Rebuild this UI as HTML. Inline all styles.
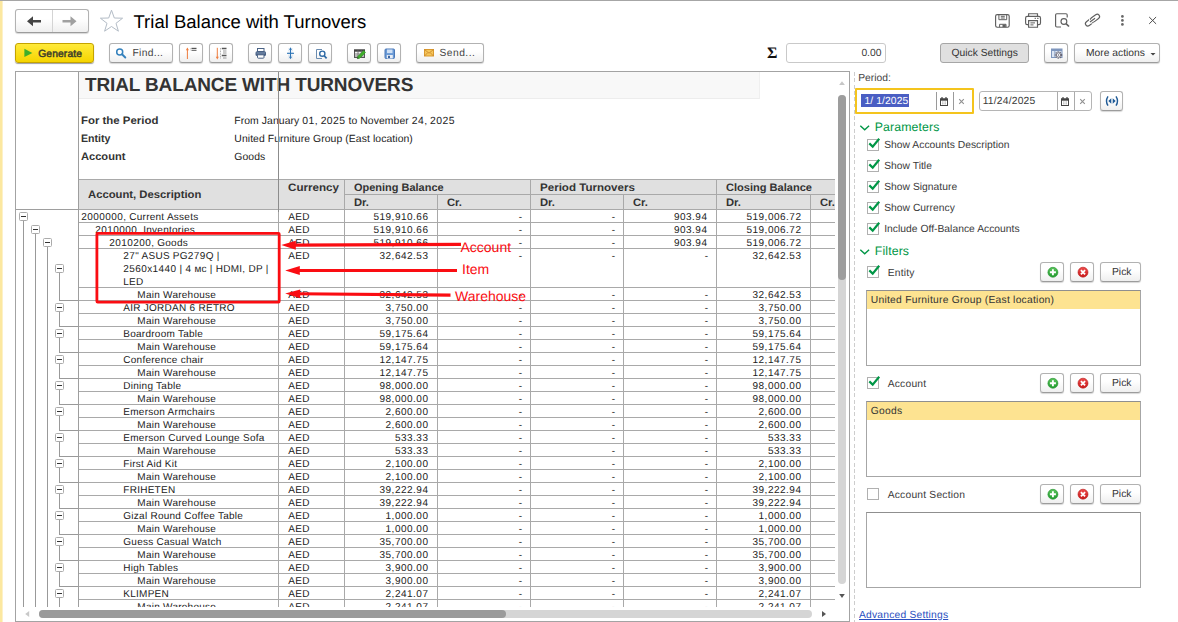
<!DOCTYPE html>
<html><head><meta charset="utf-8"><title>Trial Balance with Turnovers</title>
<style>
*{box-sizing:border-box;margin:0;padding:0}
html,body{width:1178px;height:622px;overflow:hidden;background:#fff}
body{position:relative;font-family:"Liberation Sans",sans-serif;font-size:10.3px;color:#333;text-rendering:geometricPrecision}
.abs{position:absolute}
.t{position:absolute;white-space:nowrap;line-height:1}
.btn{position:absolute;height:20px;border:1px solid #b2b2b2;border-bottom-color:#9c9c9c;border-radius:3px;background:linear-gradient(#ffffff 40%,#efefef);box-shadow:0 1px 1px rgba(0,0,0,.16)}
.btn svg{position:absolute;left:0;top:0}
.bt{position:absolute;white-space:nowrap;line-height:1;top:5px;font-size:10.3px;color:#333}
/* sheet */
#sheet{position:absolute;left:15px;top:71px;width:835px;height:551px;border:1px solid #a3a3a3;border-right-color:#a3a3a3;background:#fff;overflow:hidden}
#grid{position:absolute;left:0;top:0;width:819px;height:535px;overflow:hidden}
#gi{position:absolute;left:-16px;top:-72px;width:1178px;height:622px}
.hl{position:absolute;height:1px;background:#a9a9a9}
.vl{position:absolute;width:1px;background:#a9a9a9}
.c{position:absolute;white-space:nowrap;line-height:1;font-size:10px;color:#222;letter-spacing:.26px}
.d{letter-spacing:.42px}
.n{position:absolute;white-space:nowrap;line-height:1;font-size:10px;color:#222;text-align:right;letter-spacing:.5px}
.hb{position:absolute;white-space:nowrap;line-height:1;font-size:10.8px;font-weight:bold;color:#333;transform-origin:0 0}
.gb{position:absolute;width:9px;height:9px;border:1px solid #ababab;border-radius:1.5px;background:#fff}
.gb:after{content:"";position:absolute;left:1px;top:3px;width:5px;height:1px;background:#333}
.gl{position:absolute;width:1px;background:#999}
.gh{position:absolute;height:1px;background:#999}
/* right panel */
.cb{position:absolute;width:12px;height:12px;border:1px solid #b0b0b0;background:#fff}
.cb svg{position:absolute;left:-1px;top:-3px}
.lb{position:absolute;left:866px;width:275px;height:76px;border:1px solid #a6a6a6;border-top-color:#8f8f8f;background:#fff}
.lb .sel{position:absolute;left:0;top:0;right:0;height:18px;background:#fde391}
.lb .sel span{position:absolute;left:3.800px;top:5px;line-height:1;white-space:nowrap;color:#333}
.ui{font-size:10.3px;color:#3a3a3a;letter-spacing:.02px}
.grp{position:absolute;font-size:12.3px;color:#009646;line-height:1;white-space:nowrap;letter-spacing:.12px}
</style></head><body>
<!-- window chrome -->
<div class="abs" style="left:0;top:0;width:1178px;height:1px;background:#a6a6a6"></div>
<div class="abs" style="left:0;top:1px;width:3px;height:621px;background:linear-gradient(90deg,#fce8a0 0,#fce8a0 2px,#fdf1c8 2px)"></div>

<!-- nav -->
<div class="btn" style="left:15px;top:9px;width:74px;height:24px;border-radius:3px"></div>
<div class="abs" style="left:52px;top:10px;width:1px;height:22px;background:#d4d4d4"></div>
<svg class="abs" style="left:15px;top:9px" width="74" height="23" viewBox="0 0 74 23">
<path d="M12 12.2 L18 7.2 L18 10.9 L26 10.9 L26 13.5 L18 13.5 L18 17.2 Z" fill="#444"/>
<path d="M61.5 12.2 L55.5 7.2 L55.5 10.9 L47.5 10.9 L47.5 13.5 L55.5 13.5 L55.5 17.2 Z" fill="#a0a0a0"/>
</svg>
<svg class="abs" style="left:98px;top:8.300px" width="28" height="26" viewBox="0 0 28 26">
<path d="M13.5 2.2 L16.3 10 L24.6 10.2 L18 15.3 L20.4 23.2 L13.5 18.5 L6.6 23.2 L9 15.3 L2.4 10.2 L10.7 10 Z" fill="#fff" stroke="#b3bcc6" stroke-width="1"/>
</svg>
<div class="t" style="left:133.5px;top:13px;font-size:18.5px;color:#000">Trial Balance with Turnovers</div>

<!-- top-right icons -->
<svg class="abs" style="left:988px;top:6px" width="180" height="30" viewBox="988 6 180 30" fill="none" stroke="#5f5f5f" stroke-width="1.150">
<!-- save -->
<rect x="995.600" y="14.600" width="13.600" height="12.600" rx="1.600"/>
<path d="M998.900 14.600 V19.700 H1006.700 V14.600 M1000.800 16.300 H1004.800 M1000.800 18 H1004.800" stroke-width="1"/>
<path d="M999.600 27.200 V24.300 H1006 V27.200" stroke-width="1"/><rect x="1002.500" y="24.600" width="3.200" height="2.600" fill="#5f5f5f" stroke="none"/>
<!-- print -->
<path d="M1028.600 16.400 V13.700 H1037.500 V16.400"/>
<path d="M1028.600 24.600 H1027.200 a1.600 1.600 0 0 1 -1.600 -1.600 V18 a1.600 1.600 0 0 1 1.600 -1.600 H1038.900 a1.600 1.600 0 0 1 1.600 1.600 V23 a1.600 1.600 0 0 1 -1.600 1.600 H1037.500"/>
<path d="M1028.600 20.600 H1037.500 V27.200 H1028.600 Z"/><path d="M1030.400 22.900 H1035 M1030.400 24.900 H1033.500 M1034.600 18.300 H1036 M1037 18.300 H1038.600" stroke-width="1"/>
<!-- preview -->
<path d="M1061 27 H1056.800 a1.200 1.200 0 0 1 -1.200 -1.200 V14.900 a1.200 1.200 0 0 1 1.200 -1.200 H1066 a1.200 1.200 0 0 1 1.200 1.200 V17.600"/>
<circle cx="1063.900" cy="21.500" r="2.900"/><path d="M1066 23.700 L1069 26.500" stroke-width="1.700"/>
<!-- link -->
<g transform="rotate(-37 1092.500 20.100)"><rect x="1084.300" y="17.700" width="10" height="4.800" rx="2.400"/><rect x="1090.700" y="17.700" width="10" height="4.800" rx="2.400" stroke="#fff" stroke-width="2.800"/><rect x="1090.700" y="17.700" width="10" height="4.800" rx="2.400"/><path d="M1089 20.100 H1096" stroke="#fff" stroke-width="3"/><path d="M1089.300 20.100 H1095.700"/></g>
<!-- dots -->
<g fill="#666" stroke="none"><circle cx="1122.400" cy="16.400" r="1.350"/><circle cx="1122.400" cy="20.400" r="1.350"/><circle cx="1122.400" cy="24.400" r="1.350"/></g>
<!-- close -->
<path d="M1149.200 17 L1156.100 23.900 M1156.100 17 L1149.200 23.900" stroke="#4a4a4a" stroke-width="1"/>
</svg>

<!-- toolbar -->
<div class="btn" style="left:15px;top:43px;width:79px;border-color:#c4a300;background:linear-gradient(#ffea3a,#f5d400);box-shadow:0 1px 1px rgba(0,0,0,.38)">
<svg width="79" height="19" viewBox="0 0 79 19"><path d="M8.400 4.700 L16.300 8.900 L8.400 13.100 Z" fill="#3fae2a"/></svg>
<span class="bt" style="left:22.200px;top:6px;font-size:10.300px;letter-spacing:.12px;color:#3a3a2a;-webkit-text-stroke:.45px #3a3a2a">Generate</span></div>

<div class="btn" style="left:109px;top:43px;width:64px"><svg width="64" height="19" viewBox="0 0 64 19"><circle cx="9.700" cy="7.900" r="3" fill="none" stroke="#3582bd" stroke-width="1.500"/><path d="M12 10.300 L15.300 13.500" stroke="#3582bd" stroke-width="1.900" stroke-linecap="round"/></svg><span class="bt" style="left:22.500px;top:5px;letter-spacing:.3px;color:#444">Find...</span></div>

<div class="btn" style="left:179px;top:43px;width:24px"><svg width="24" height="19" viewBox="0 0 24 19"><path d="M7.400 15 V4.500" stroke="#ee7d3f" stroke-width="1"/><path d="M5.900 6.200 L7.400 3.600 L8.900 6.200 Z" fill="#ee7d3f"/><path d="M10.700 4.200 V6.800" stroke="#999" stroke-width=".7" stroke-dasharray=".7 .7"/><path d="M11.500 4.500 H16.500" stroke="#555" stroke-width="1.400"/><path d="M11.500 6.500 H16.500" stroke="#777" stroke-width="1"/></svg></div>
<div class="btn" style="left:209px;top:43px;width:24px"><svg width="24" height="19" viewBox="0 0 24 19"><path d="M7.300 3.800 V14" stroke="#ee7d3f" stroke-width="1"/><path d="M5.800 12.800 L7.300 15.600 L8.800 12.800 Z" fill="#ee7d3f"/><path d="M10.500 4 V15" stroke="#888" stroke-width=".8" stroke-dasharray=".8 .8"/><path d="M11.800 4.500 H16.500 M11.800 11.500 H16.500" stroke="#555" stroke-width="1.300"/><path d="M13 7 H16.500 M13 9 H16.500 M13 14 H16.500" stroke="#999" stroke-width="1"/></svg></div>

<div class="btn" style="left:248px;top:43px;width:24px"><svg width="24" height="19" viewBox="0 0 24 19"><rect x="8.500" y="4.500" width="6.500" height="3" fill="#fff" stroke="#4a6285" stroke-width="1"/><rect x="6.500" y="7.200" width="10.500" height="4.800" rx="1.500" fill="#4a6285"/><path d="M7.500 9 H16" stroke="#8ea3c2" stroke-width=".8"/><rect x="8.500" y="10.800" width="6.500" height="3.400" rx=".8" fill="#fff" stroke="#4a6285" stroke-width="1"/></svg></div>
<div class="btn" style="left:278px;top:43px;width:24px"><svg width="24" height="19" viewBox="0 0 24 19"><path d="M9.800 4.500 V14.500 M13.200 4.500 V14.500" stroke="#b9d2ea" stroke-width=".8" stroke-dasharray=".8 .8"/><path d="M11.500 4.500 V14" stroke="#2e74b5" stroke-width="1.100"/><path d="M8 9.300 H15" stroke="#2e74b5" stroke-width="1.100"/><path d="M10 5.800 L11.500 3.300 L13 5.800 Z M10 12.800 L11.500 15.300 L13 12.800 Z" fill="#2e74b5"/></svg></div>
<div class="btn" style="left:308px;top:43px;width:24px"><svg width="24" height="19" viewBox="0 0 24 19"><path d="M13 5.500 H7.500 V14.500 H13" fill="none" stroke="#6b8cb0" stroke-width="1"/><circle cx="13.300" cy="9.700" r="2.600" fill="#fff" stroke="#2e6aa5" stroke-width="1.400"/><path d="M15.200 11.700 L17.600 14.400" stroke="#2e6aa5" stroke-width="1.700"/></svg></div>

<div class="btn" style="left:347px;top:43px;width:24px"><svg width="24" height="19" viewBox="0 0 24 19"><rect x="6.500" y="6" width="10" height="7.500" fill="#f1f1f1" stroke="#555" stroke-width="1"/><rect x="6" y="5.500" width="11" height="2.200" fill="#444"/><path d="M6.500 10 H16.500 M6.500 12 H16.500 M10 6 V13.500 M13.300 6 V13.500" stroke="#666" stroke-width=".8"/><path d="M9.300 14.700 L9.900 12.300 L15.700 6.500 L17.600 8.400 L11.800 14.200 Z" fill="#3fae2a" stroke="#2c8a22" stroke-width=".5"/><path d="M9.300 14.700 L9.700 13.100 L10.900 14.300 Z" fill="#333"/></svg></div>
<div class="btn" style="left:377px;top:43px;width:24px"><svg width="24" height="19" viewBox="0 0 24 19"><rect x="7" y="5" width="9.500" height="9.500" rx="1" fill="#6a9ad6" stroke="#4a78b8" stroke-width="1"/><rect x="9" y="5.500" width="5.500" height="3.600" fill="#cfe0f5"/><rect x="8.800" y="11" width="6" height="3.500" fill="#e9eef6"/><rect x="10" y="11.800" width="2" height="2.200" fill="#3d66a0"/></svg></div>

<div class="btn" style="left:416px;top:43px;width:68px"><svg width="68" height="19" viewBox="0 0 68 19"><rect x="7.500" y="5.500" width="9" height="6.500" fill="#f6c75a" stroke="#d9982f" stroke-width="1"/><path d="M7.500 5.500 L12 9.200 L16.500 5.500 M7.500 12 L10.800 8.600 M16.500 12 L13.200 8.600" fill="none" stroke="#c8832a" stroke-width=".8"/></svg><span class="bt" style="left:22.500px;top:5px;letter-spacing:.45px;color:#444">Send...</span></div>

<!-- sigma + sum -->
<div class="t" style="left:767px;top:45.800px;font-size:16px;font-weight:bold;color:#111;font-family:'Liberation Serif',serif">Σ</div>
<div class="abs" style="left:786px;top:43px;width:100px;height:20px;border:1px solid #c9c9c9;border-radius:3px;background:#fff"></div>
<div class="t ui" style="left:786px;width:95.500px;text-align:right;top:49px">0.00</div>

<div class="btn" style="left:940px;top:43px;width:89px;background:#e0e0e0;border-color:#a6a6a6;box-shadow:none;height:20px"><span class="bt" style="left:10.500px;top:5px;color:#333">Quick Settings</span></div>
<div class="btn" style="left:1044px;top:43px;width:24px"><svg width="24" height="19" viewBox="0 0 24 19"><rect x="6.500" y="5" width="10.500" height="8.500" fill="#dce6f4" stroke="#7e96bd" stroke-width="1"/><rect x="6.500" y="5" width="10.500" height="2" fill="#7e96bd"/><path d="M9.800 7 V13.500" stroke="#7e96bd" stroke-width=".8"/><circle cx="13.500" cy="11" r="3.100" fill="#f4f4f4" stroke="#667" stroke-width="1.300" stroke-dasharray="1.300 .9"/><circle cx="13.500" cy="11" r="2.200" fill="#fff" stroke="#667" stroke-width=".9"/><circle cx="13.500" cy="11" r=".8" fill="#667"/></svg></div>
<div class="btn" style="left:1074px;top:43px;width:86px"><span class="bt" style="left:11px;top:5px;color:#333">More actions</span><svg width="86" height="19" viewBox="0 0 86 19"><path d="M75.500 9 H80.500 L78 11.600 Z" fill="#444"/></svg></div>

<div id="sheet"><div id="grid"><div id="gi">
<!--SHEET-START-->
<div class="abs" style="left:79px;top:72px;width:681px;height:27px;background:#f8f8f8;border-bottom:1px solid #ededed;border-right:1px solid #efefef"></div>
<div class="t" style="left:85px;top:76px;font-size:19px;font-weight:bold;color:#333;letter-spacing:-.14px">TRIAL BALANCE WITH TURNOVERS</div>
<div class="hb" style="left:81.3px;top:115.7px;transform:scaleX(1.057)">For the Period</div>
<div class="c" style="left:234.3px;top:116.8px;color:#222;font-size:10.4px;letter-spacing:.08px">From January <span class="d">01</span>, <span class="d">2025</span> to November <span class="d">24</span>, <span class="d">2025</span></div>
<div class="hb" style="left:81.3px;top:133.7px;transform:scaleX(0.98)">Entity</div>
<div class="c" style="left:234.3px;top:134.8px;color:#222;font-size:10.4px;letter-spacing:.08px">United Furniture Group (East location)</div>
<div class="hb" style="left:81.3px;top:151.7px;transform:scaleX(1.028)">Account</div>
<div class="c" style="left:234.3px;top:152.8px;color:#222;font-size:10.4px;letter-spacing:.08px">Goods</div>
<div class="abs" style="left:79px;top:180px;width:760px;height:29px;background:#e0e0e0"></div>
<div class="hl" style="left:79px;top:179px;width:760px"></div>
<div class="hl" style="left:344px;top:194px;width:500px"></div>
<div class="vl" style="left:437px;top:194px;height:15px"></div>
<div class="vl" style="left:623px;top:194px;height:15px"></div>
<div class="vl" style="left:810px;top:194px;height:15px"></div>
<div class="vl" style="left:344px;top:179px;height:30px"></div>
<div class="vl" style="left:530px;top:179px;height:30px"></div>
<div class="vl" style="left:716px;top:179px;height:30px"></div>
<div class="hb" style="left:88.2px;top:189.6px;transform:scaleX(1.044)">Account, Description</div>
<div class="hb" style="left:288px;top:183.2px;transform:scaleX(1.076)">Currency</div>
<div class="hb" style="left:354.3px;top:183.2px;transform:scaleX(1.016)">Opening Balance</div>
<div class="hb" style="left:540.3px;top:183.2px;transform:scaleX(1.071)">Period Turnovers</div>
<div class="hb" style="left:726.3px;top:183.2px;transform:scaleX(1.024)">Closing Balance</div>
<div class="hb" style="left:354.3px;top:197.6px;transform:scaleX(1.04)">Dr.</div>
<div class="hb" style="left:447.3px;top:197.6px;transform:scaleX(1.04)">Cr.</div>
<div class="hb" style="left:540.3px;top:197.6px;transform:scaleX(1.04)">Dr.</div>
<div class="hb" style="left:633.3px;top:197.6px;transform:scaleX(1.04)">Cr.</div>
<div class="hb" style="left:726.3px;top:197.6px;transform:scaleX(1.04)">Dr.</div>
<div class="hb" style="left:820.3px;top:197.6px;transform:scaleX(1.04)">Cr.</div>
<div class="hl" style="left:79px;top:209px;width:760px"></div>
<div class="c" style="left:81.3px;top:213.0px"><span class="d">2000000</span>, Current Assets</div>
<div class="c" style="left:288.3px;top:213.0px">AED</div>
<div class="n" style="left:348.5px;width:80px;top:213.0px">519,910.66</div>
<div class="n" style="left:442.7px;width:80px;top:213.0px">-</div>
<div class="n" style="left:535.7px;width:80px;top:213.0px">-</div>
<div class="n" style="left:627.5px;width:80px;top:213.0px">903.94</div>
<div class="n" style="left:721.5px;width:80px;top:213.0px">519,006.72</div>
<div class="hl" style="left:79px;top:222px;width:760px"></div>
<div class="c" style="left:95.3px;top:226.0px"><span class="d">2010000</span>, Inventories</div>
<div class="c" style="left:288.3px;top:226.0px">AED</div>
<div class="n" style="left:348.5px;width:80px;top:226.0px">519,910.66</div>
<div class="n" style="left:442.7px;width:80px;top:226.0px">-</div>
<div class="n" style="left:535.7px;width:80px;top:226.0px">-</div>
<div class="n" style="left:627.5px;width:80px;top:226.0px">903.94</div>
<div class="n" style="left:721.5px;width:80px;top:226.0px">519,006.72</div>
<div class="hl" style="left:79px;top:235px;width:760px"></div>
<div class="c" style="left:109.3px;top:239.0px"><span class="d">2010200</span>, Goods</div>
<div class="c" style="left:288.3px;top:239.0px">AED</div>
<div class="n" style="left:348.5px;width:80px;top:239.0px">519,910.66</div>
<div class="n" style="left:442.7px;width:80px;top:239.0px">-</div>
<div class="n" style="left:535.7px;width:80px;top:239.0px">-</div>
<div class="n" style="left:627.5px;width:80px;top:239.0px">903.94</div>
<div class="n" style="left:721.5px;width:80px;top:239.0px">519,006.72</div>
<div class="hl" style="left:79px;top:248px;width:760px"></div>
<div class="c" style="left:123.3px;top:252.0px"><span class="d">27</span>&quot; ASUS PG<span class="d">279</span>Q |</div>
<div class="c" style="left:123.3px;top:265.0px"><span class="d">2560</span>x<span class="d">1440</span> | <span class="d">4</span> мс | HDMI, DP |</div>
<div class="c" style="left:123.3px;top:278.0px">LED</div>
<div class="c" style="left:288.3px;top:252.0px">AED</div>
<div class="n" style="left:348.5px;width:80px;top:252.0px">32,642.53</div>
<div class="n" style="left:442.7px;width:80px;top:252.0px">-</div>
<div class="n" style="left:535.7px;width:80px;top:252.0px">-</div>
<div class="n" style="left:628.7px;width:80px;top:252.0px">-</div>
<div class="n" style="left:721.5px;width:80px;top:252.0px">32,642.53</div>
<div class="hl" style="left:79px;top:287px;width:760px"></div>
<div class="c" style="left:137.3px;top:291.0px">Main Warehouse</div>
<div class="c" style="left:288.3px;top:291.0px">AED</div>
<div class="n" style="left:348.5px;width:80px;top:291.0px">32,642.53</div>
<div class="n" style="left:442.7px;width:80px;top:291.0px">-</div>
<div class="n" style="left:535.7px;width:80px;top:291.0px">-</div>
<div class="n" style="left:628.7px;width:80px;top:291.0px">-</div>
<div class="n" style="left:721.5px;width:80px;top:291.0px">32,642.53</div>
<div class="hl" style="left:79px;top:300px;width:760px"></div>
<div class="c" style="left:123.3px;top:304.0px">AIR JORDAN <span class="d">6</span> RETRO</div>
<div class="c" style="left:288.3px;top:304.0px">AED</div>
<div class="n" style="left:348.5px;width:80px;top:304.0px">3,750.00</div>
<div class="n" style="left:442.7px;width:80px;top:304.0px">-</div>
<div class="n" style="left:535.7px;width:80px;top:304.0px">-</div>
<div class="n" style="left:628.7px;width:80px;top:304.0px">-</div>
<div class="n" style="left:721.5px;width:80px;top:304.0px">3,750.00</div>
<div class="hl" style="left:79px;top:313px;width:760px"></div>
<div class="c" style="left:137.3px;top:317.0px">Main Warehouse</div>
<div class="c" style="left:288.3px;top:317.0px">AED</div>
<div class="n" style="left:348.5px;width:80px;top:317.0px">3,750.00</div>
<div class="n" style="left:442.7px;width:80px;top:317.0px">-</div>
<div class="n" style="left:535.7px;width:80px;top:317.0px">-</div>
<div class="n" style="left:628.7px;width:80px;top:317.0px">-</div>
<div class="n" style="left:721.5px;width:80px;top:317.0px">3,750.00</div>
<div class="hl" style="left:79px;top:326px;width:760px"></div>
<div class="c" style="left:123.3px;top:330.0px">Boardroom Table</div>
<div class="c" style="left:288.3px;top:330.0px">AED</div>
<div class="n" style="left:348.5px;width:80px;top:330.0px">59,175.64</div>
<div class="n" style="left:442.7px;width:80px;top:330.0px">-</div>
<div class="n" style="left:535.7px;width:80px;top:330.0px">-</div>
<div class="n" style="left:628.7px;width:80px;top:330.0px">-</div>
<div class="n" style="left:721.5px;width:80px;top:330.0px">59,175.64</div>
<div class="hl" style="left:79px;top:339px;width:760px"></div>
<div class="c" style="left:137.3px;top:343.0px">Main Warehouse</div>
<div class="c" style="left:288.3px;top:343.0px">AED</div>
<div class="n" style="left:348.5px;width:80px;top:343.0px">59,175.64</div>
<div class="n" style="left:442.7px;width:80px;top:343.0px">-</div>
<div class="n" style="left:535.7px;width:80px;top:343.0px">-</div>
<div class="n" style="left:628.7px;width:80px;top:343.0px">-</div>
<div class="n" style="left:721.5px;width:80px;top:343.0px">59,175.64</div>
<div class="hl" style="left:79px;top:352px;width:760px"></div>
<div class="c" style="left:123.3px;top:356.0px">Conference chair</div>
<div class="c" style="left:288.3px;top:356.0px">AED</div>
<div class="n" style="left:348.5px;width:80px;top:356.0px">12,147.75</div>
<div class="n" style="left:442.7px;width:80px;top:356.0px">-</div>
<div class="n" style="left:535.7px;width:80px;top:356.0px">-</div>
<div class="n" style="left:628.7px;width:80px;top:356.0px">-</div>
<div class="n" style="left:721.5px;width:80px;top:356.0px">12,147.75</div>
<div class="hl" style="left:79px;top:365px;width:760px"></div>
<div class="c" style="left:137.3px;top:369.0px">Main Warehouse</div>
<div class="c" style="left:288.3px;top:369.0px">AED</div>
<div class="n" style="left:348.5px;width:80px;top:369.0px">12,147.75</div>
<div class="n" style="left:442.7px;width:80px;top:369.0px">-</div>
<div class="n" style="left:535.7px;width:80px;top:369.0px">-</div>
<div class="n" style="left:628.7px;width:80px;top:369.0px">-</div>
<div class="n" style="left:721.5px;width:80px;top:369.0px">12,147.75</div>
<div class="hl" style="left:79px;top:378px;width:760px"></div>
<div class="c" style="left:123.3px;top:382.0px">Dining Table</div>
<div class="c" style="left:288.3px;top:382.0px">AED</div>
<div class="n" style="left:348.5px;width:80px;top:382.0px">98,000.00</div>
<div class="n" style="left:442.7px;width:80px;top:382.0px">-</div>
<div class="n" style="left:535.7px;width:80px;top:382.0px">-</div>
<div class="n" style="left:628.7px;width:80px;top:382.0px">-</div>
<div class="n" style="left:721.5px;width:80px;top:382.0px">98,000.00</div>
<div class="hl" style="left:79px;top:391px;width:760px"></div>
<div class="c" style="left:137.3px;top:395.0px">Main Warehouse</div>
<div class="c" style="left:288.3px;top:395.0px">AED</div>
<div class="n" style="left:348.5px;width:80px;top:395.0px">98,000.00</div>
<div class="n" style="left:442.7px;width:80px;top:395.0px">-</div>
<div class="n" style="left:535.7px;width:80px;top:395.0px">-</div>
<div class="n" style="left:628.7px;width:80px;top:395.0px">-</div>
<div class="n" style="left:721.5px;width:80px;top:395.0px">98,000.00</div>
<div class="hl" style="left:79px;top:404px;width:760px"></div>
<div class="c" style="left:123.3px;top:408.0px">Emerson Armchairs</div>
<div class="c" style="left:288.3px;top:408.0px">AED</div>
<div class="n" style="left:348.5px;width:80px;top:408.0px">2,600.00</div>
<div class="n" style="left:442.7px;width:80px;top:408.0px">-</div>
<div class="n" style="left:535.7px;width:80px;top:408.0px">-</div>
<div class="n" style="left:628.7px;width:80px;top:408.0px">-</div>
<div class="n" style="left:721.5px;width:80px;top:408.0px">2,600.00</div>
<div class="hl" style="left:79px;top:417px;width:760px"></div>
<div class="c" style="left:137.3px;top:421.0px">Main Warehouse</div>
<div class="c" style="left:288.3px;top:421.0px">AED</div>
<div class="n" style="left:348.5px;width:80px;top:421.0px">2,600.00</div>
<div class="n" style="left:442.7px;width:80px;top:421.0px">-</div>
<div class="n" style="left:535.7px;width:80px;top:421.0px">-</div>
<div class="n" style="left:628.7px;width:80px;top:421.0px">-</div>
<div class="n" style="left:721.5px;width:80px;top:421.0px">2,600.00</div>
<div class="hl" style="left:79px;top:430px;width:760px"></div>
<div class="c" style="left:123.3px;top:434.0px">Emerson Curved Lounge Sofa</div>
<div class="c" style="left:288.3px;top:434.0px">AED</div>
<div class="n" style="left:348.5px;width:80px;top:434.0px">533.33</div>
<div class="n" style="left:442.7px;width:80px;top:434.0px">-</div>
<div class="n" style="left:535.7px;width:80px;top:434.0px">-</div>
<div class="n" style="left:628.7px;width:80px;top:434.0px">-</div>
<div class="n" style="left:721.5px;width:80px;top:434.0px">533.33</div>
<div class="hl" style="left:79px;top:443px;width:760px"></div>
<div class="c" style="left:137.3px;top:447.0px">Main Warehouse</div>
<div class="c" style="left:288.3px;top:447.0px">AED</div>
<div class="n" style="left:348.5px;width:80px;top:447.0px">533.33</div>
<div class="n" style="left:442.7px;width:80px;top:447.0px">-</div>
<div class="n" style="left:535.7px;width:80px;top:447.0px">-</div>
<div class="n" style="left:628.7px;width:80px;top:447.0px">-</div>
<div class="n" style="left:721.5px;width:80px;top:447.0px">533.33</div>
<div class="hl" style="left:79px;top:456px;width:760px"></div>
<div class="c" style="left:123.3px;top:460.0px">First Aid Kit</div>
<div class="c" style="left:288.3px;top:460.0px">AED</div>
<div class="n" style="left:348.5px;width:80px;top:460.0px">2,100.00</div>
<div class="n" style="left:442.7px;width:80px;top:460.0px">-</div>
<div class="n" style="left:535.7px;width:80px;top:460.0px">-</div>
<div class="n" style="left:628.7px;width:80px;top:460.0px">-</div>
<div class="n" style="left:721.5px;width:80px;top:460.0px">2,100.00</div>
<div class="hl" style="left:79px;top:469px;width:760px"></div>
<div class="c" style="left:137.3px;top:473.0px">Main Warehouse</div>
<div class="c" style="left:288.3px;top:473.0px">AED</div>
<div class="n" style="left:348.5px;width:80px;top:473.0px">2,100.00</div>
<div class="n" style="left:442.7px;width:80px;top:473.0px">-</div>
<div class="n" style="left:535.7px;width:80px;top:473.0px">-</div>
<div class="n" style="left:628.7px;width:80px;top:473.0px">-</div>
<div class="n" style="left:721.5px;width:80px;top:473.0px">2,100.00</div>
<div class="hl" style="left:79px;top:482px;width:760px"></div>
<div class="c" style="left:123.3px;top:486.0px">FRIHETEN</div>
<div class="c" style="left:288.3px;top:486.0px">AED</div>
<div class="n" style="left:348.5px;width:80px;top:486.0px">39,222.94</div>
<div class="n" style="left:442.7px;width:80px;top:486.0px">-</div>
<div class="n" style="left:535.7px;width:80px;top:486.0px">-</div>
<div class="n" style="left:628.7px;width:80px;top:486.0px">-</div>
<div class="n" style="left:721.5px;width:80px;top:486.0px">39,222.94</div>
<div class="hl" style="left:79px;top:495px;width:760px"></div>
<div class="c" style="left:137.3px;top:499.0px">Main Warehouse</div>
<div class="c" style="left:288.3px;top:499.0px">AED</div>
<div class="n" style="left:348.5px;width:80px;top:499.0px">39,222.94</div>
<div class="n" style="left:442.7px;width:80px;top:499.0px">-</div>
<div class="n" style="left:535.7px;width:80px;top:499.0px">-</div>
<div class="n" style="left:628.7px;width:80px;top:499.0px">-</div>
<div class="n" style="left:721.5px;width:80px;top:499.0px">39,222.94</div>
<div class="hl" style="left:79px;top:508px;width:760px"></div>
<div class="c" style="left:123.3px;top:512.0px">Gizal Round Coffee Table</div>
<div class="c" style="left:288.3px;top:512.0px">AED</div>
<div class="n" style="left:348.5px;width:80px;top:512.0px">1,000.00</div>
<div class="n" style="left:442.7px;width:80px;top:512.0px">-</div>
<div class="n" style="left:535.7px;width:80px;top:512.0px">-</div>
<div class="n" style="left:628.7px;width:80px;top:512.0px">-</div>
<div class="n" style="left:721.5px;width:80px;top:512.0px">1,000.00</div>
<div class="hl" style="left:79px;top:521px;width:760px"></div>
<div class="c" style="left:137.3px;top:525.0px">Main Warehouse</div>
<div class="c" style="left:288.3px;top:525.0px">AED</div>
<div class="n" style="left:348.5px;width:80px;top:525.0px">1,000.00</div>
<div class="n" style="left:442.7px;width:80px;top:525.0px">-</div>
<div class="n" style="left:535.7px;width:80px;top:525.0px">-</div>
<div class="n" style="left:628.7px;width:80px;top:525.0px">-</div>
<div class="n" style="left:721.5px;width:80px;top:525.0px">1,000.00</div>
<div class="hl" style="left:79px;top:534px;width:760px"></div>
<div class="c" style="left:123.3px;top:538.0px">Guess Casual Watch</div>
<div class="c" style="left:288.3px;top:538.0px">AED</div>
<div class="n" style="left:348.5px;width:80px;top:538.0px">35,700.00</div>
<div class="n" style="left:442.7px;width:80px;top:538.0px">-</div>
<div class="n" style="left:535.7px;width:80px;top:538.0px">-</div>
<div class="n" style="left:628.7px;width:80px;top:538.0px">-</div>
<div class="n" style="left:721.5px;width:80px;top:538.0px">35,700.00</div>
<div class="hl" style="left:79px;top:547px;width:760px"></div>
<div class="c" style="left:137.3px;top:551.0px">Main Warehouse</div>
<div class="c" style="left:288.3px;top:551.0px">AED</div>
<div class="n" style="left:348.5px;width:80px;top:551.0px">35,700.00</div>
<div class="n" style="left:442.7px;width:80px;top:551.0px">-</div>
<div class="n" style="left:535.7px;width:80px;top:551.0px">-</div>
<div class="n" style="left:628.7px;width:80px;top:551.0px">-</div>
<div class="n" style="left:721.5px;width:80px;top:551.0px">35,700.00</div>
<div class="hl" style="left:79px;top:560px;width:760px"></div>
<div class="c" style="left:123.3px;top:564.0px">High Tables</div>
<div class="c" style="left:288.3px;top:564.0px">AED</div>
<div class="n" style="left:348.5px;width:80px;top:564.0px">3,900.00</div>
<div class="n" style="left:442.7px;width:80px;top:564.0px">-</div>
<div class="n" style="left:535.7px;width:80px;top:564.0px">-</div>
<div class="n" style="left:628.7px;width:80px;top:564.0px">-</div>
<div class="n" style="left:721.5px;width:80px;top:564.0px">3,900.00</div>
<div class="hl" style="left:79px;top:573px;width:760px"></div>
<div class="c" style="left:137.3px;top:577.0px">Main Warehouse</div>
<div class="c" style="left:288.3px;top:577.0px">AED</div>
<div class="n" style="left:348.5px;width:80px;top:577.0px">3,900.00</div>
<div class="n" style="left:442.7px;width:80px;top:577.0px">-</div>
<div class="n" style="left:535.7px;width:80px;top:577.0px">-</div>
<div class="n" style="left:628.7px;width:80px;top:577.0px">-</div>
<div class="n" style="left:721.5px;width:80px;top:577.0px">3,900.00</div>
<div class="hl" style="left:79px;top:586px;width:760px"></div>
<div class="c" style="left:123.3px;top:590.0px">KLIMPEN</div>
<div class="c" style="left:288.3px;top:590.0px">AED</div>
<div class="n" style="left:348.5px;width:80px;top:590.0px">2,241.07</div>
<div class="n" style="left:442.7px;width:80px;top:590.0px">-</div>
<div class="n" style="left:535.7px;width:80px;top:590.0px">-</div>
<div class="n" style="left:628.7px;width:80px;top:590.0px">-</div>
<div class="n" style="left:721.5px;width:80px;top:590.0px">2,241.07</div>
<div class="hl" style="left:79px;top:599px;width:760px"></div>
<div class="c" style="left:137.3px;top:603.0px">Main Warehouse</div>
<div class="c" style="left:288.3px;top:603.0px">AED</div>
<div class="n" style="left:348.5px;width:80px;top:603.0px">2,241.07</div>
<div class="n" style="left:442.7px;width:80px;top:603.0px">-</div>
<div class="n" style="left:535.7px;width:80px;top:603.0px">-</div>
<div class="n" style="left:628.7px;width:80px;top:603.0px">-</div>
<div class="n" style="left:721.5px;width:80px;top:603.0px">2,241.07</div>
<div class="hl" style="left:79px;top:612px;width:760px"></div>
<div class="vl" style="left:278px;top:209px;height:420px"></div>
<div class="vl" style="left:344px;top:209px;height:420px"></div>
<div class="vl" style="left:437px;top:209px;height:420px"></div>
<div class="vl" style="left:530px;top:209px;height:420px"></div>
<div class="vl" style="left:623px;top:209px;height:420px"></div>
<div class="vl" style="left:716px;top:209px;height:420px"></div>
<div class="vl" style="left:810px;top:209px;height:420px"></div>
<div class="vl" style="left:78px;top:72px;height:560px;background:#9e9e9e"></div>
<div class="vl" style="left:278px;top:72px;height:140px;background:#8c8c8c"></div>
<div class="hl" style="left:16px;top:209px;width:63px;background:#9e9e9e"></div>
<div class="gb" style="left:19px;top:212px"></div>
<div class="gl" style="left:23px;top:221px;height:420px"></div>
<div class="gb" style="left:31px;top:225px"></div>
<div class="gl" style="left:35px;top:234px;height:420px"></div>
<div class="gb" style="left:43px;top:238px"></div>
<div class="gl" style="left:47px;top:247px;height:420px"></div>
<div class="gb" style="left:55px;top:264px"></div>
<div class="gl" style="left:59px;top:273px;height:27px"></div>
<div class="gh" style="left:59px;top:300px;width:19px"></div>
<div class="gb" style="left:55px;top:303px"></div>
<div class="gl" style="left:59px;top:312px;height:14px"></div>
<div class="gh" style="left:59px;top:326px;width:19px"></div>
<div class="gb" style="left:55px;top:329px"></div>
<div class="gl" style="left:59px;top:338px;height:14px"></div>
<div class="gh" style="left:59px;top:352px;width:19px"></div>
<div class="gb" style="left:55px;top:355px"></div>
<div class="gl" style="left:59px;top:364px;height:14px"></div>
<div class="gh" style="left:59px;top:378px;width:19px"></div>
<div class="gb" style="left:55px;top:381px"></div>
<div class="gl" style="left:59px;top:390px;height:14px"></div>
<div class="gh" style="left:59px;top:404px;width:19px"></div>
<div class="gb" style="left:55px;top:407px"></div>
<div class="gl" style="left:59px;top:416px;height:14px"></div>
<div class="gh" style="left:59px;top:430px;width:19px"></div>
<div class="gb" style="left:55px;top:433px"></div>
<div class="gl" style="left:59px;top:442px;height:14px"></div>
<div class="gh" style="left:59px;top:456px;width:19px"></div>
<div class="gb" style="left:55px;top:459px"></div>
<div class="gl" style="left:59px;top:468px;height:14px"></div>
<div class="gh" style="left:59px;top:482px;width:19px"></div>
<div class="gb" style="left:55px;top:485px"></div>
<div class="gl" style="left:59px;top:494px;height:14px"></div>
<div class="gh" style="left:59px;top:508px;width:19px"></div>
<div class="gb" style="left:55px;top:511px"></div>
<div class="gl" style="left:59px;top:520px;height:14px"></div>
<div class="gh" style="left:59px;top:534px;width:19px"></div>
<div class="gb" style="left:55px;top:537px"></div>
<div class="gl" style="left:59px;top:546px;height:14px"></div>
<div class="gh" style="left:59px;top:560px;width:19px"></div>
<div class="gb" style="left:55px;top:563px"></div>
<div class="gl" style="left:59px;top:572px;height:14px"></div>
<div class="gh" style="left:59px;top:586px;width:19px"></div>
<div class="gb" style="left:55px;top:589px"></div>
<div class="gl" style="left:59px;top:598px;height:14px"></div>
<div class="gh" style="left:59px;top:612px;width:19px"></div>
<!--SHEET-END-->
</div></div></div>
<!--OV-START-->
<div class="abs" style="left:838px;top:95px;width:8px;height:489px;border-radius:4px;background:#d5d5d5"></div>
<div class="abs" style="left:838px;top:95px;width:8px;height:185px;border-radius:4px;background:#9d9d9d"></div>
<svg class="abs" style="left:836px;top:80px" width="12" height="8" viewBox="0 0 12 8"><path d="M3.100 4.900 L6 1.200 L8.900 4.900 Z" fill="#c6c6c6"/></svg>
<svg class="abs" style="left:836px;top:592px" width="12" height="8" viewBox="0 0 12 8"><path d="M3.200 2 L8.800 2 L6 6 Z" fill="#555"/></svg>
<div class="abs" style="left:39px;top:610px;width:773px;height:8px;border-radius:4px;background:#d5d5d5"></div>
<div class="abs" style="left:39px;top:610px;width:467px;height:8px;border-radius:4px;background:#9a9a9a"></div>
<svg class="abs" style="left:23px;top:608px" width="8" height="12" viewBox="0 0 8 12"><path d="M6.200 3 L6.200 9 L2.200 6 Z" fill="#c8c8c8"/></svg>
<svg class="abs" style="left:820px;top:608px" width="8" height="12" viewBox="0 0 8 12"><path d="M2 3 L2 9 L6 6 Z" fill="#555"/></svg>
<svg class="abs" style="left:90px;top:225px" width="450" height="85" viewBox="90 225 450 85">
<rect x="96.900" y="233.300" width="182.300" height="68.800" rx=".8" fill="none" stroke="#fa0d12" stroke-width="2.800" stroke-linejoin="round"/>
<g stroke="#fa0d12" stroke-width="3.300" fill="#fa0d12">
<path d="M294 245.200 L461 244.300"/><path d="M281.300 245.100 L295.800 240.800 L295.800 249.700 Z" stroke="none"/>
<path d="M298 270.500 L457 270.500" stroke-width="3.100"/><path d="M285.200 270.400 L299.800 266.100 L299.800 275 Z" stroke="none"/>
<path d="M298 293.800 L450.500 295.100" stroke-width="3.100"/><path d="M285.200 293.600 L300.200 289.400 L300.200 298.200 Z" stroke="none"/>
</g>
<g font-family="Liberation Sans, sans-serif" font-size="14" fill="#fa0d12">
<text x="460.500" y="251.700">Account</text>
<text x="462" y="273.900">Item</text>
<text x="455" y="300.900">Warehouse</text>
</g></svg>
<div class="abs" style="left:854px;top:72px;width:1px;height:550px;background:repeating-linear-gradient(#cdcdcd 0,#cdcdcd 3.900px,transparent 3.900px,transparent 6.300px)"></div>
<div class="t ui" style="left:858.2px;top:74px;color:#444">Period:</div>
<div class="abs" style="left:855px;top:88px;width:119px;height:26px;border:2px solid #f4c41d;border-radius:1px;background:#fff"></div>
<div class="abs" style="left:861px;top:94px;width:48px;height:13px;background:#4a5ec3"></div>
<div class="t ui" style="left:864.4px;top:97px;color:#fff;letter-spacing:.12px">1/ 1/2025</div>
<div class="vl" style="left:936px;top:92px;height:18px;background:#9a9a9a"></div>
<div class="vl" style="left:953px;top:92px;height:18px;background:#9a9a9a"></div>
<svg class="abs" style="left:939px;top:96px" width="10" height="11" viewBox="0 0 10 11"><rect x="1.500" y="3" width="7" height="6.500" fill="#fff" stroke="#444" stroke-width="1"/><rect x="1" y="2.500" width="8" height="2.200" fill="#444"/><path d="M3 1 V3.500 M7 1 V3.500" stroke="#444" stroke-width="1.200"/><path d="M3 6 H7 M3 7.800 H7" stroke="#999" stroke-width=".8" stroke-dasharray="1 .5"/></svg>
<svg class="abs" style="left:958px;top:98px" width="7" height="7" viewBox="0 0 7 7"><path d="M1.200 1.200 L5.800 5.800 M5.800 1.200 L1.200 5.800" stroke="#909090" stroke-width="1.100"/></svg>
<div class="abs" style="left:979px;top:91px;width:113px;height:20px;border:1px solid #b5b5b5;border-radius:3px;background:#fff"></div>
<div class="t ui" style="left:982.7px;top:97px;letter-spacing:.2px">11/24/2025</div>
<div class="vl" style="left:1057px;top:92px;height:18px;background:#ababab"></div>
<div class="vl" style="left:1074px;top:92px;height:18px;background:#ababab"></div>
<svg class="abs" style="left:1060px;top:96px" width="10" height="11" viewBox="0 0 10 11"><rect x="1.500" y="3" width="7" height="6.500" fill="#fff" stroke="#444" stroke-width="1"/><rect x="1" y="2.500" width="8" height="2.200" fill="#444"/><path d="M3 1 V3.500 M7 1 V3.500" stroke="#444" stroke-width="1.200"/><path d="M3 6 H7 M3 7.800 H7" stroke="#999" stroke-width=".8" stroke-dasharray="1 .5"/></svg>
<svg class="abs" style="left:1079px;top:98px" width="7" height="7" viewBox="0 0 7 7"><path d="M1.200 1.200 L5.800 5.800 M5.800 1.200 L1.200 5.800" stroke="#909090" stroke-width="1.100"/></svg>
<div class="btn" style="left:1100px;top:91px;width:23px;height:20px"><svg width="23" height="19" viewBox="0 0 23 19"><g fill="none" stroke="#1f5a96" stroke-width="1.400"><path d="M7 4.300 Q4 9 7 13.700"/><path d="M15 4.300 Q18 9 15 13.700"/></g><path d="M7.300 9 L10.300 6.200 V11.800 Z M14.700 9 L11.700 6.200 V11.800 Z" fill="#1f5a96"/></svg></div>
<svg class="abs" style="left:859.3px;top:123.5px" width="12" height="8" viewBox="0 0 12 8"><path d="M1.300 1.800 L5.700 5.800 L10.100 1.800" fill="none" stroke="#009646" stroke-width="1.400"/></svg>
<div class="grp" style="left:874.8px;top:121px">Parameters</div>
<svg class="abs" style="left:859.3px;top:247.5px" width="12" height="8" viewBox="0 0 12 8"><path d="M1.300 1.800 L5.700 5.800 L10.100 1.800" fill="none" stroke="#009646" stroke-width="1.400"/></svg>
<div class="grp" style="left:874.8px;top:245px">Filters</div>
<div class="cb" style="left:867px;top:139px"><svg width="16" height="16" viewBox="0 0 16 16"><path d="M2.300 6.400 L5.700 9.600 L12.200 1.800" fill="none" stroke="#009646" stroke-width="2.200"/></svg></div>
<div class="t ui" style="left:884.2px;top:141px">Show Accounts Description</div>
<div class="cb" style="left:867px;top:160px"><svg width="16" height="16" viewBox="0 0 16 16"><path d="M2.300 6.400 L5.700 9.600 L12.200 1.800" fill="none" stroke="#009646" stroke-width="2.200"/></svg></div>
<div class="t ui" style="left:884.2px;top:162px">Show Title</div>
<div class="cb" style="left:867px;top:181px"><svg width="16" height="16" viewBox="0 0 16 16"><path d="M2.300 6.400 L5.700 9.600 L12.200 1.800" fill="none" stroke="#009646" stroke-width="2.200"/></svg></div>
<div class="t ui" style="left:884.2px;top:183px">Show Signature</div>
<div class="cb" style="left:867px;top:202px"><svg width="16" height="16" viewBox="0 0 16 16"><path d="M2.300 6.400 L5.700 9.600 L12.200 1.800" fill="none" stroke="#009646" stroke-width="2.200"/></svg></div>
<div class="t ui" style="left:884.2px;top:204px">Show Currency</div>
<div class="cb" style="left:867px;top:223px"><svg width="16" height="16" viewBox="0 0 16 16"><path d="M2.300 6.400 L5.700 9.600 L12.200 1.800" fill="none" stroke="#009646" stroke-width="2.200"/></svg></div>
<div class="t ui" style="left:884.2px;top:225px">Include Off-Balance Accounts</div>
<div class="cb" style="left:867px;top:266px"><svg width="16" height="16" viewBox="0 0 16 16"><path d="M2.300 6.400 L5.700 9.600 L12.200 1.800" fill="none" stroke="#009646" stroke-width="2.200"/></svg></div>
<div class="t ui" style="left:887.700px;top:269px;letter-spacing:.2px">Entity</div>
<div class="btn" style="left:1040px;top:262px;width:24px;height:20px"><svg width="24" height="19" viewBox="0 0 24 19"><defs><linearGradient id="gG" x1="0" y1="0" x2="0" y2="1"><stop offset="0" stop-color="#5cc45c"/><stop offset="1" stop-color="#1f9a2c"/></linearGradient></defs><circle cx="11.900" cy="9.300" r="5" fill="url(#gG)" stroke="#1f8f2a" stroke-width=".6"/><path d="M11.900 6.300 V12.300 M8.900 9.300 H14.900" stroke="#fff" stroke-width="1.900"/></svg></div>
<div class="btn" style="left:1070px;top:262px;width:24px;height:20px"><svg width="24" height="19" viewBox="0 0 24 19"><defs><linearGradient id="gR" x1="0" y1="0" x2="0" y2="1"><stop offset="0" stop-color="#ee4a4a"/><stop offset="1" stop-color="#c91a1a"/></linearGradient></defs><circle cx="12" cy="9.200" r="5" fill="url(#gR)" stroke="#b51818" stroke-width=".6"/><path d="M9.900 7.100 L14.100 11.300 M14.100 7.100 L9.900 11.300" stroke="#fff" stroke-width="1.800"/></svg></div>
<div class="btn" style="left:1100px;top:262px;width:41px;height:20px"><span class="bt" style="left:11px;top:5px">Pick</span></div>
<div class="lb" style="top:290px"><div class="sel"><span class="ui" style="letter-spacing:.25px">United Furniture Group (East location)</span></div></div>
<div class="cb" style="left:867px;top:377px"><svg width="16" height="16" viewBox="0 0 16 16"><path d="M2.300 6.400 L5.700 9.600 L12.200 1.800" fill="none" stroke="#009646" stroke-width="2.200"/></svg></div>
<div class="t ui" style="left:887.700px;top:380px;letter-spacing:.2px">Account</div>
<div class="btn" style="left:1040px;top:373px;width:24px;height:20px"><svg width="24" height="19" viewBox="0 0 24 19"><defs><linearGradient id="gG" x1="0" y1="0" x2="0" y2="1"><stop offset="0" stop-color="#5cc45c"/><stop offset="1" stop-color="#1f9a2c"/></linearGradient></defs><circle cx="11.900" cy="9.300" r="5" fill="url(#gG)" stroke="#1f8f2a" stroke-width=".6"/><path d="M11.900 6.300 V12.300 M8.900 9.300 H14.900" stroke="#fff" stroke-width="1.900"/></svg></div>
<div class="btn" style="left:1070px;top:373px;width:24px;height:20px"><svg width="24" height="19" viewBox="0 0 24 19"><defs><linearGradient id="gR" x1="0" y1="0" x2="0" y2="1"><stop offset="0" stop-color="#ee4a4a"/><stop offset="1" stop-color="#c91a1a"/></linearGradient></defs><circle cx="12" cy="9.200" r="5" fill="url(#gR)" stroke="#b51818" stroke-width=".6"/><path d="M9.900 7.100 L14.100 11.300 M14.100 7.100 L9.900 11.300" stroke="#fff" stroke-width="1.800"/></svg></div>
<div class="btn" style="left:1100px;top:373px;width:41px;height:20px"><span class="bt" style="left:11px;top:5px">Pick</span></div>
<div class="lb" style="top:401px"><div class="sel"><span class="ui" style="letter-spacing:.25px">Goods</span></div></div>
<div class="cb" style="left:867px;top:488px"></div>
<div class="t ui" style="left:887.700px;top:491px;letter-spacing:.2px">Account Section</div>
<div class="btn" style="left:1040px;top:484px;width:24px;height:20px"><svg width="24" height="19" viewBox="0 0 24 19"><defs><linearGradient id="gG" x1="0" y1="0" x2="0" y2="1"><stop offset="0" stop-color="#5cc45c"/><stop offset="1" stop-color="#1f9a2c"/></linearGradient></defs><circle cx="11.900" cy="9.300" r="5" fill="url(#gG)" stroke="#1f8f2a" stroke-width=".6"/><path d="M11.900 6.300 V12.300 M8.900 9.300 H14.900" stroke="#fff" stroke-width="1.900"/></svg></div>
<div class="btn" style="left:1070px;top:484px;width:24px;height:20px"><svg width="24" height="19" viewBox="0 0 24 19"><defs><linearGradient id="gR" x1="0" y1="0" x2="0" y2="1"><stop offset="0" stop-color="#ee4a4a"/><stop offset="1" stop-color="#c91a1a"/></linearGradient></defs><circle cx="12" cy="9.200" r="5" fill="url(#gR)" stroke="#b51818" stroke-width=".6"/><path d="M9.900 7.100 L14.100 11.300 M14.100 7.100 L9.900 11.300" stroke="#fff" stroke-width="1.800"/></svg></div>
<div class="btn" style="left:1100px;top:484px;width:41px;height:20px"><span class="bt" style="left:11px;top:5px">Pick</span></div>
<div class="lb" style="top:512px"></div>
<div class="t ui" style="left:859px;top:611px;color:#2a4fc0;text-decoration:underline;letter-spacing:.2px">Advanced Settings</div>
<!--OV-END-->
</body></html>
